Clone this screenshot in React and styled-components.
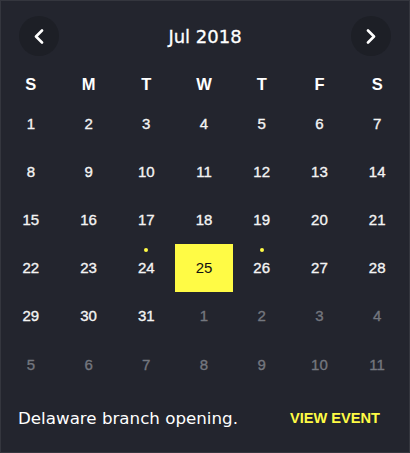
import React from 'react';
import styled, { createGlobalStyle } from 'styled-components';

const GlobalStyle = createGlobalStyle`
  html, body {
    margin: 0;
    padding: 0;
    background: #23252e;
  }
`;

const YELLOW = '#fffb45';

const weekdays = ['S', 'M', 'T', 'W', 'T', 'F', 'S'];

function buildDays() {
  const days = [];
  for (let d = 1; d <= 31; d += 1) days.push({ n: d, current: true });
  for (let d = 1; d <= 11; d += 1) days.push({ n: d, current: false });
  return days;
}

const eventDays = [24, 26];

function Chevron({ dir }) {
  const pts = dir === 'left' ? '8,1.5 2,7.5 8,13.5' : '2,1.5 8,7.5 2,13.5';
  return (
    <svg width="10" height="15" viewBox="0 0 10 15">
      <polyline points={pts} fill="none" stroke="#fff" strokeWidth="2.6" strokeLinecap="round" strokeLinejoin="round" />
    </svg>
  );
}

export default function App() {
  const days = buildDays();
  return (
    <>
      <GlobalStyle />
      <Card>
        <Header>
          <NavBtn><Chevron dir="left" /></NavBtn>
          <Title>Jul 2018</Title>
          <NavBtn><Chevron dir="right" /></NavBtn>
        </Header>
        <WeekRow>
          {weekdays.map((w, i) => <WeekDay key={i}>{w}</WeekDay>)}
        </WeekRow>
        <DayGrid>
          {days.map((d, i) => {
            const selected = d.current && d.n === 25;
            const hasEvent = d.current && eventDays.includes(d.n);
            return (
              <Day key={i} $dim={!d.current} $selected={selected}>
                {hasEvent && <Dot />}
                {d.n}
              </Day>
            );
          })}
        </DayGrid>
        <Footer>
          <EventText>Delaware branch opening.</EventText>
          <ViewLink>VIEW EVENT</ViewLink>
        </Footer>
      </Card>
    </>
  );
}

const Card = styled.div`
  box-sizing: border-box;
  width: 410px;
  height: 453px;
  background: #23252e;
  border: 1px solid #34363e;
  padding-top: 15px;
  display: flex;
  flex-direction: column;
`;

const Header = styled.div`
  display: flex;
  align-items: center;
  justify-content: space-between;
  padding: 0 18px;
  height: 40px;
`;

const NavBtn = styled.button`
  width: 40px;
  height: 40px;
  border-radius: 50%;
  border: none;
  background: #1d1f26;
  display: flex;
  align-items: center;
  justify-content: center;
  padding: 0;
  cursor: pointer;
`;

const Title = styled.div`
  color: #fff;
  font-family: 'DejaVu Sans', Verdana, sans-serif;
  font-size: 18px;
  font-weight: 400;
  -webkit-text-stroke: 0.3px #fff;
`;

const WeekRow = styled.div`
  display: grid;
  grid-template-columns: repeat(7, 1fr);
  margin: 13px 3px 0 1px;
  height: 30px;
  align-items: center;
`;

const WeekDay = styled.div`
  text-align: center;
  color: #fff;
  font-family: 'Liberation Sans', Arial, sans-serif;
  font-weight: 700;
  font-size: 16.5px;
`;

const DayGrid = styled.div`
  display: grid;
  grid-template-columns: repeat(7, 1fr);
  grid-auto-rows: 48.2px;
  margin: 0 3px 0 1px;
`;

const Day = styled.div`
  position: relative;
  display: flex;
  align-items: center;
  justify-content: center;
  font-family: 'Liberation Sans', Arial, sans-serif;
  font-size: 15px;
  font-weight: 400;
  -webkit-text-stroke: ${(p) => (p.$selected ? '0' : '0.35px')} currentColor;
  color: ${(p) => (p.$selected ? '#111' : p.$dim ? '#74777f' : '#f4f4f4')};
  background: ${(p) => (p.$selected ? YELLOW : 'transparent')};
`;

const Dot = styled.span`
  position: absolute;
  top: 4px;
  left: 50%;
  margin-left: -2px;
  width: 4px;
  height: 4px;
  border-radius: 50%;
  background: ${YELLOW};
`;

const Footer = styled.div`
  display: flex;
  align-items: center;
  justify-content: space-between;
  height: 60px;
  padding: 0 29px 0 17px;
`;

const EventText = styled.div`
  color: #fff;
  font-family: 'DejaVu Sans', Verdana, sans-serif;
  font-size: 16.7px;
`;

const ViewLink = styled.div`
  color: ${YELLOW};
  font-family: 'Liberation Sans', Arial, sans-serif;
  font-size: 14.6px;
  font-weight: 700;
`;
